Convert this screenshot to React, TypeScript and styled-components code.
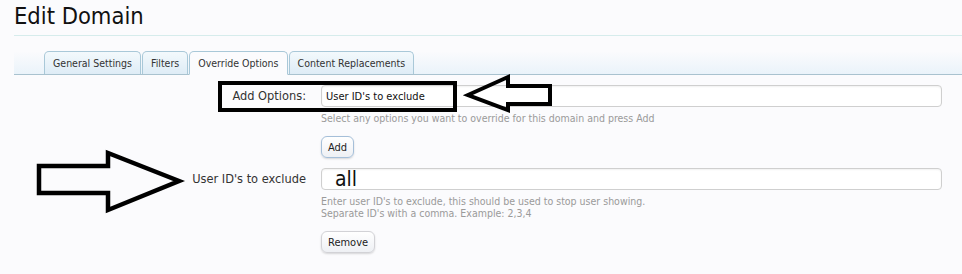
import React from "react";
import styled, { createGlobalStyle } from "styled-components";

const GlobalStyle = createGlobalStyle`
  html, body {
    margin: 0;
    background: #fbfbfd;
  }
  body {
    font-family: Tahoma, "DejaVu Sans Condensed", "DejaVu Sans", sans-serif;
    color: #222;
  }
`;

const Page = styled.div`
  position: relative; /* annotations sit over the form */
  width: 962px;
  height: 274px;
  padding-left: 14px;
  box-sizing: border-box;
  overflow: hidden;
`;

const Title = styled.h1`
  margin: 0;
  padding-top: 2px;
  height: 33px;
  font-size: 23.5px;
  font-weight: normal;
  color: #111;
  line-height: 28px;
  border-bottom: 1px solid #d6ecec;
`;

const TabBar = styled.div`
  display: flex;
  align-items: flex-end;
  height: 38px;
  padding-left: 30px;
  background: linear-gradient(to bottom, #fbfbfd 40%, #eaf3fa 100%);
  border-bottom: 1px solid #a9c2cf;
`;

const Tab = styled.div<{ $active?: boolean }>`
  height: 22px;
  line-height: 22px;
  padding: 0 8px;
  margin-right: 1px;
  font-size: 10.5px;
  color: #333;
  border: 1px solid #a9c8d8;
  border-bottom: ${(p) => (p.$active ? "1px solid #fbfbfd" : "none")};
  border-radius: 5px 5px 0 0;
  margin-bottom: ${(p) => (p.$active ? "-1px" : "0")};
  background: ${(p) =>
    p.$active
      ? "#fbfbfd"
      : "linear-gradient(to bottom, #f3f9fc 0%, #deecf6 100%)"};
`;

const Form = styled.div`
  padding: 10px 20px 0 0;
`;

const Row = styled.div<{ $gap?: number }>`
  display: grid;
  grid-template-columns: 292px 1fr;
  column-gap: 15px;
  margin-top: ${(p) => p.$gap ?? 0}px;
`;

const Label = styled.div`
  text-align: right;
  font-size: 12.7px;
  line-height: 22px;
  color: #333;
`;

const Field = styled.div`
  display: flex;
  flex-direction: column;
  align-items: flex-start;
`;

const TextBox = styled.input<{ $big?: boolean }>`
  width: 100%;
  height: 22px;
  box-sizing: border-box;
  border: 1px solid #cfcfcf;
  border-radius: 4px;
  background: #fff;
  box-shadow: inset 0 1px 2px rgba(0, 0, 0, 0.06);
  font-family: inherit;
  font-size: ${(p) => (p.$big ? "21px" : "11px")};
  color: #111;
  padding: 0 0 0 ${(p) => (p.$big ? "13px" : "4px")};
  outline: none;
`;

const Hint = styled.div`
  margin-top: 5px;
  font-size: 10.5px;
  line-height: 12px;
  color: #9a9a9a;
`;

const Button = styled.button<{ $blue?: boolean; $gap?: number }>`
  margin-top: ${(p) => p.$gap ?? 12}px;
  height: 22px;
  padding: 0 6px;
  font-family: inherit;
  font-size: 11px;
  color: #222;
  border: 1px solid ${(p) => (p.$blue ? "#a5bfd9" : "#d2d2d6")};
  border-radius: 6px;
  background: linear-gradient(to bottom, #ffffff 0%, #eef0f4 100%);
  box-shadow: 0 1px 2px rgba(0, 0, 0, 0.15);
`;

/* screenshot annotations drawn over the form */
const HighlightBox = styled.div`
  position: absolute;
  left: 218px;
  top: 81px;
  width: 231px;
  height: 23px;
  border: 4px solid #000;
`;

const Arrow = styled.svg`
  position: absolute;
  left: 0;
  top: 0;
  overflow: visible;
`;

const App: React.FC = () => (
  <>
    <GlobalStyle />
    <Page>
      <Title>Edit Domain</Title>
      <TabBar>
        <Tab>General Settings</Tab>
        <Tab>Filters</Tab>
        <Tab $active>Override Options</Tab>
        <Tab>Content Replacements</Tab>
      </TabBar>
      <Form>
        <Row>
          <Label>Add Options:</Label>
          <Field>
            <TextBox readOnly defaultValue="User ID's to exclude" />
            <Hint>
              Select any options you want to override for this domain and
              press Add
            </Hint>
            <Button $blue $gap={12}>Add</Button>
          </Field>
        </Row>
        <Row $gap={10}>
          <Label>User ID's to exclude</Label>
          <Field>
            <TextBox $big readOnly defaultValue="all" />
            <Hint>
              Enter user ID's to exclude, this should be used to stop user
              showing.
              <br />
              Separate ID's with a comma. Example: 2,3,4
            </Hint>
            <Button $gap={12}>Remove</Button>
          </Field>
        </Row>
      </Form>

      <HighlightBox />
      <Arrow width="962" height="274" viewBox="0 0 962 274">
        <polygon
          points="468,95 508,77 508,86 550,86 550,104 508,104 508,110"
          fill="none"
          stroke="#000"
          strokeWidth="4"
          strokeLinejoin="miter"
        />
        <polygon
          points="39,166 108,166 108,153 179,181 108,210 108,193 39,193"
          fill="none"
          stroke="#000"
          strokeWidth="4.5"
          strokeLinejoin="miter"
        />
      </Arrow>
    </Page>
  </>
);

export default App;
